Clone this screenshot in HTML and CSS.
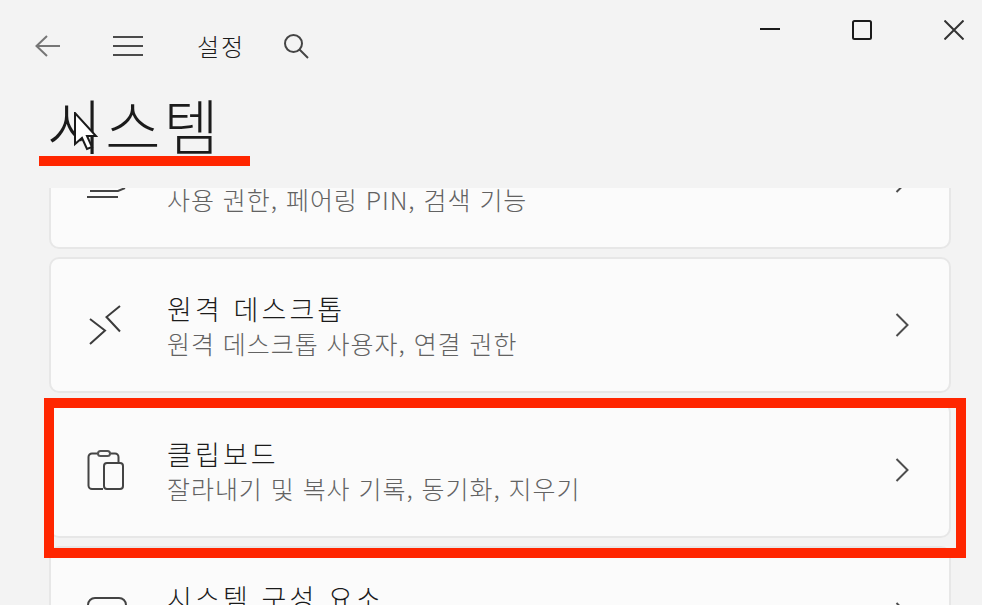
FILE: index.html
```html
<!DOCTYPE html>
<html lang="ko">
<head>
<meta charset="utf-8">
<title>설정</title>
<link rel="stylesheet" href="styles.css">
</head>
<body>
<div class="window">
  <header class="header">
    <div class="bar">
      <svg class="ic-back" width="28" height="24" viewBox="0 0 28 24"><path d="M13 2 2.500 12 13 22M3 12h23" fill="none" stroke="#767676" stroke-width="2"/></svg>
      <svg class="ic-menu" width="30" height="20" viewBox="0 0 30 20"><path d="M0 1h30M0 10h30M0 19h30" fill="none" stroke="#4a4a4a" stroke-width="2"/></svg>
      <span class="app-name">설정</span>
      <svg class="ic-search" width="26" height="26" viewBox="0 0 26 26"><circle cx="10.500" cy="10.500" r="8.500" fill="none" stroke="#444" stroke-width="2"/><path d="M16.500 16.500 25 25" fill="none" stroke="#444" stroke-width="2"/></svg>
      <div class="controls">
        <svg width="20" height="20" viewBox="0 0 20 20"><path d="M0 9h20" fill="none" stroke="#1a1a1a" stroke-width="2"/></svg>
        <svg width="20" height="20" viewBox="0 0 20 20"><rect x="1" y="1" width="18" height="18" rx="1.500" fill="none" stroke="#1a1a1a" stroke-width="2"/></svg>
        <svg width="20" height="20" viewBox="0 0 20 20"><path d="M0.500 0.500 19.500 19.500M19.500 0.500 0.500 19.500" fill="none" stroke="#333" stroke-width="2"/></svg>
      </div>
    </div>
    <h1 class="title">시스템</h1>
  </header>
  <main class="viewport">
    <div class="list">
      <section class="card">
        <svg class="icon" width="40" height="40" viewBox="0 0 40 40"><path d="M0 36h31M3 30h28l7-3" fill="none" stroke="#444" stroke-width="2"/></svg>
        <div class="text">
          <div class="name">근접 공유</div>
          <div class="desc">사용 권한, 페어링 PIN, 검색 기능</div>
        </div>
        <svg class="chev" width="14" height="24" viewBox="0 0 14 24"><path d="M1.500 1 12.500 12 1.500 23" fill="none" stroke="#4d4d4d" stroke-width="2"/></svg>
      </section>
      <section class="card">
        <svg class="icon" width="40" height="40" viewBox="0 0 40 40"><path d="M3 14 18 25.500 3 39M33 1 19.500 12 33 26.500" fill="none" stroke="#3c3c3c" stroke-width="2"/></svg>
        <div class="text">
          <div class="name">원격 데스크톱</div>
          <div class="desc">원격 데스크톱 사용자, 연결 권한</div>
        </div>
        <svg class="chev" width="14" height="24" viewBox="0 0 14 24"><path d="M1.500 1 12.500 12 1.500 23" fill="none" stroke="#4d4d4d" stroke-width="2"/></svg>
      </section>
      <section class="card">
        <svg class="icon" width="40" height="40" viewBox="0 0 40 40"><path d="M16 39H5a3.500 3.500 0 0 1-3.500-3.500V7A3.500 3.500 0 0 1 5 3.500h6M23 3.500h5a3.500 3.500 0 0 1 3.500 3.500v5" fill="none" stroke="#444" stroke-width="2"/><rect x="11" y="1" width="12" height="5" rx="2.500" fill="none" stroke="#555" stroke-width="2"/><rect x="17" y="13" width="19" height="26" rx="3" fill="none" stroke="#444" stroke-width="2"/></svg>
        <div class="text">
          <div class="name">클립보드</div>
          <div class="desc">잘라내기 및 복사 기록, 동기화, 지우기</div>
        </div>
        <svg class="chev" width="14" height="24" viewBox="0 0 14 24"><path d="M1.500 1 12.500 12 1.500 23" fill="none" stroke="#4d4d4d" stroke-width="2"/></svg>
      </section>
      <section class="card">
        <svg class="icon" width="40" height="40" viewBox="0 0 40 40"><rect x="1" y="4" width="38" height="30" rx="7" fill="none" stroke="#444" stroke-width="2"/></svg>
        <div class="text">
          <div class="name">시스템 구성 요소</div>
          <div class="desc">시스템 구성 요소 관리</div>
        </div>
        <svg class="chev" width="14" height="24" viewBox="0 0 14 24"><path d="M1.500 1 12.500 12 1.500 23" fill="none" stroke="#4d4d4d" stroke-width="2"/></svg>
      </section>
    </div>
  </main>
  <div class="mark-line"></div>
  <div class="mark-box"></div>
  <svg class="cursor" width="24" height="40" viewBox="0 0 24 40"><path d="M1 1V32L8 26 13 37 18 35 13 24H22Z" fill="#fff" stroke="#1a1a1a" stroke-width="2"/></svg>
</div>
</body>
</html>
```
FILE: styles.css
```css
* { box-sizing: border-box; }
html, body { margin: 0; padding: 0; }
body {
  background: #f3f3f3;
  font-family: "Noto Sans CJK KR", "Noto Sans", sans-serif;
  font-weight: 300;
  color: #1b1b1b;
}
.window {
  position: relative;
  width: 982px;
  height: 605px;
  overflow: hidden;
  display: flex;
  flex-direction: column;
}
.header {
  flex: 0 0 188px;
  padding: 0 18px 0 36px;
}
.bar {
  position: relative;
  display: flex;
  align-items: center;
  height: 92px;
}
.ic-back { margin-left: -2px; }
.ic-menu { margin-left: 51px; }
.app-name {
  margin-left: 54px;
  font-size: 24px;
  line-height: 30px;
  letter-spacing: 2px;
}
.ic-search { margin-left: 38px; }
.controls {
  position: absolute;
  top: 20px;
  right: 0;
  display: flex;
  gap: 72px;
}
.title {
  margin: -4px 0 0 11px;
  font-size: 60px;
  line-height: 72px;
  font-weight: 300;
  letter-spacing: 3px;
}
.viewport {
  flex: 1;
  min-height: 0;
  overflow: hidden;
  padding: 0 31px 0 49px;
}
.list {
  margin-top: -75.500px;
  display: flex;
  flex-direction: column;
  gap: 8.500px;
}
.card {
  flex: none;
  height: 136px;
  display: flex;
  align-items: center;
  padding: 0 40px 0 36px;
  background: #fbfbfb;
  border: 2px solid #e7e7e7;
  border-radius: 10px;
}
.icon { flex: none; }
.text {
  flex: 1;
  margin-left: 40px;
}
.name {
  font-size: 27px;
  line-height: 36px;
  letter-spacing: 3.100px;
  color: #1b1b1b;
}
.desc {
  font-size: 25px;
  line-height: 32px;
  letter-spacing: 0.950px;
  color: #626262;
}
.chev { flex: none; }
.mark-line {
  position: absolute;
  left: 39px;
  top: 156px;
  width: 211px;
  height: 10px;
  background: #ff2600;
}
.mark-box {
  position: absolute;
  left: 44px;
  top: 398px;
  width: 922px;
  height: 160px;
  border: 10px solid #ff2600;
}
.cursor {
  position: absolute;
  left: 74px;
  top: 112px;
}
```
